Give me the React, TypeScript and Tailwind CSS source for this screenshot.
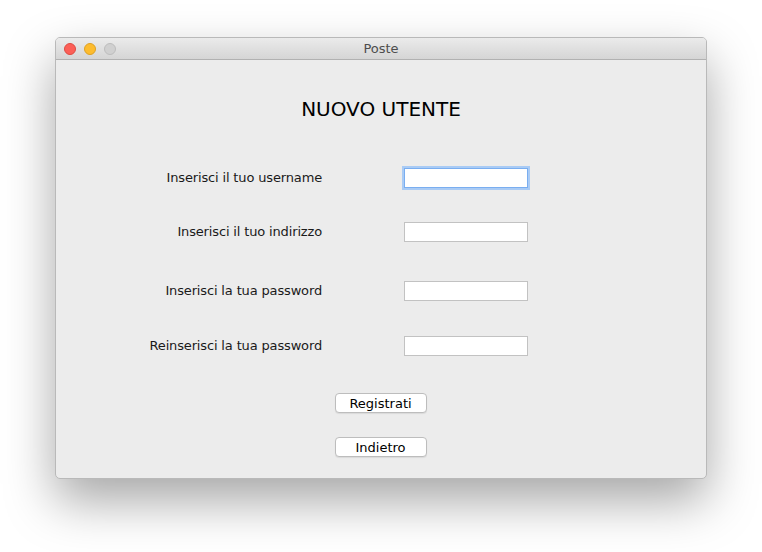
import { useState } from 'react';

const font = { fontFamily: '"DejaVu Sans", "Open Sans", sans-serif' };

function Field({ focused }: { focused?: boolean }) {
  return (
    <input
      className={
        focused
          ? 'w-[124px] h-[20px] bg-white border border-[#7aaef0] shadow-[0_0_0_2px_#a9cbf5] outline-none'
          : 'w-[124px] h-[20px] bg-white border border-[#c2c2c2] outline-none'
      }
    />
  );
}

function Row({ label, focused, mt }: { label: string; focused?: boolean; mt: string }) {
  return (
    <div className={`flex items-center h-[20px] ${mt}`}>
      <div className="w-[266px] text-right text-[13px] tracking-[-0.15px] text-[#1a1a1a] whitespace-nowrap">{label}</div>
      <div className="ml-[82px]">
        <Field focused={focused} />
      </div>
    </div>
  );
}

function Btn({ label, mt }: { label: string; mt: string }) {
  return (
    <div className={`flex justify-center ${mt}`}>
      <button className="ml-[-1px] w-[92px] h-[20px] bg-white border border-[#bdbdbd] rounded-[4px] shadow-[0_1px_1px_rgba(0,0,0,0.08)] text-[13px] text-black leading-none">
        {label}
      </button>
    </div>
  );
}

export default function App() {
  const [title] = useState('Poste');
  return (
    <div className="w-[762px] h-[552px] bg-white pt-[37px] pl-[55px]" style={font}>
      <div className="w-[652px] h-[442px] rounded-[5px] bg-[#ececec] border border-[#b9b9b9] shadow-[0_22px_50px_rgba(0,0,0,0.35)] overflow-hidden flex flex-col">
        <div className="h-[22px] shrink-0 flex items-center relative bg-gradient-to-b from-[#ebebeb] to-[#d5d5d5] border-b border-[#b1b1b1]">
          <div className="flex items-center gap-[8px] pl-[8px]">
            <span className="w-[12px] h-[12px] rounded-full bg-[#fc5f57] border border-[#de4a41]" />
            <span className="w-[12px] h-[12px] rounded-full bg-[#fdbc2e] border border-[#dea123]" />
            <span className="w-[12px] h-[12px] rounded-full bg-[#d0d0d0] border border-[#bdbdbd]" />
          </div>
          <div className="absolute inset-0 flex items-center justify-center text-[13px] text-[#4d4d4d] pointer-events-none">
            {title}
          </div>
        </div>
        <div className="flex flex-col">
          <div className="mt-[37px] h-[24px] text-center text-[20px] leading-[24px] text-black">NUOVO UTENTE</div>
          <Row label="Inserisci il tuo username" focused mt="mt-[47px]" />
          <Row label="Inserisci il tuo indirizzo" mt="mt-[34px]" />
          <Row label="Inserisci la tua password" mt="mt-[39px]" />
          <Row label="Reinserisci la tua password" mt="mt-[35px]" />
          <Btn label="Registrati" mt="mt-[37px]" />
          <Btn label="Indietro" mt="mt-[24px]" />
        </div>
      </div>
    </div>
  );
}
